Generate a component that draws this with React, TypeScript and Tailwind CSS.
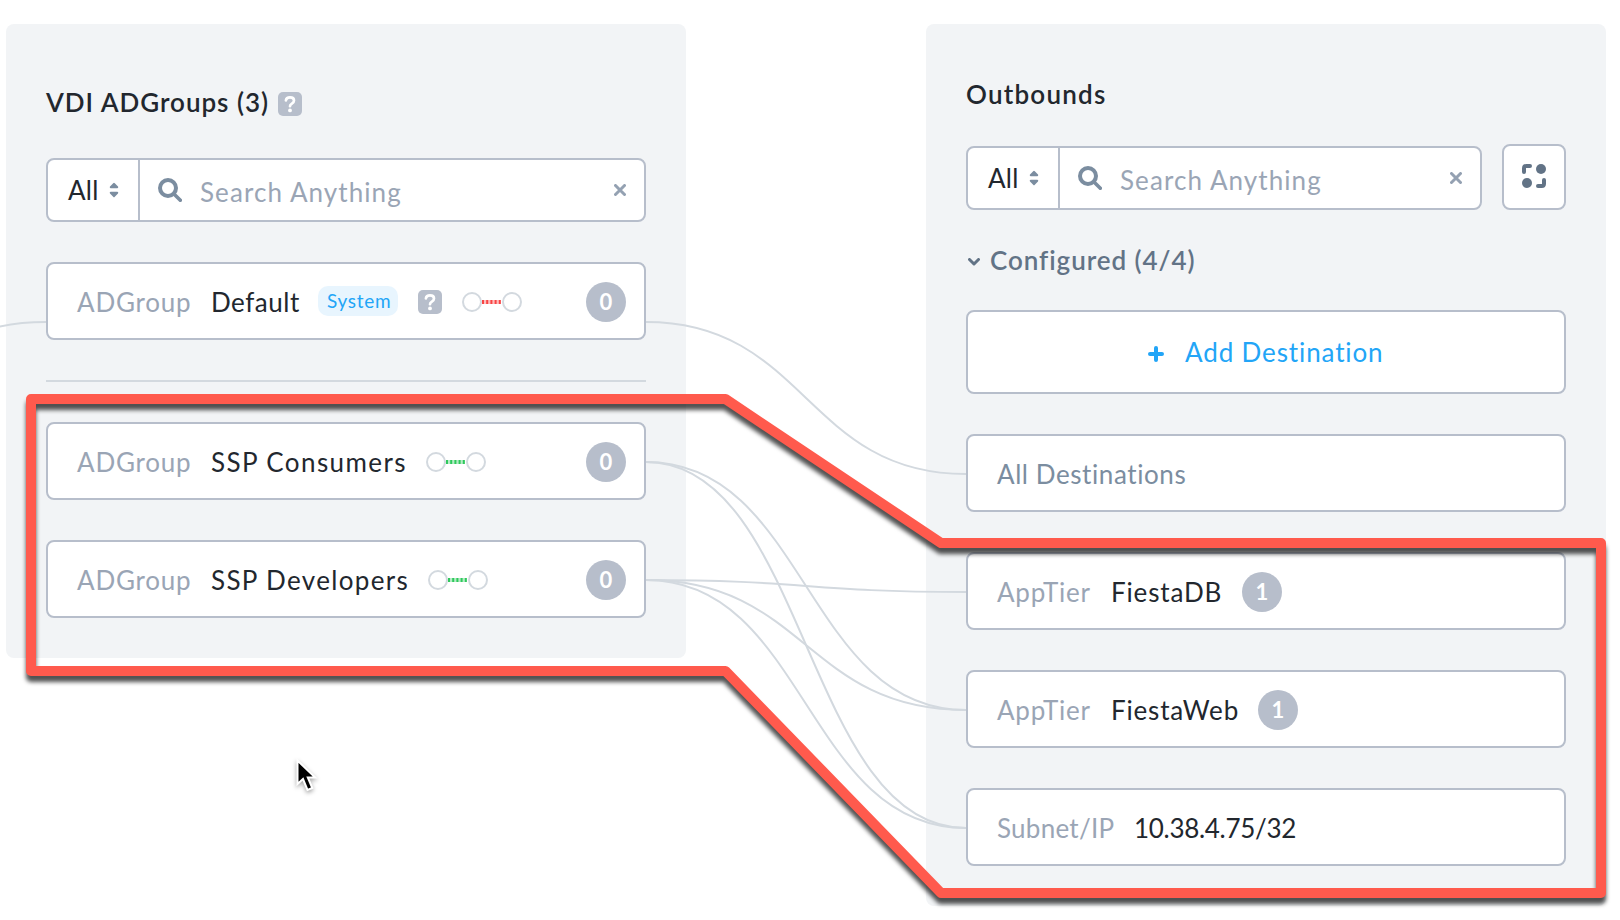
import type { ReactNode } from "react";

const box = "box-border flex shrink-0 rounded-[8px] border-2 border-[#b7becb] bg-white";

function HelpIcon() {
  return (
    <svg className="block h-6 w-6 shrink-0" viewBox="0 0 24 24" fill="none">
      <rect width="24" height="24" rx="5" fill="#b7becb" />
      <path
        d="M7.9 8.4C8.2 6.3 9.8 5.4 12 5.4c2.4 0 4 1.1 4 3.1 0 1.6-.9 2.4-2.1 3.1-1.2.7-1.9 1.1-1.9 2.6"
        stroke="white"
        strokeWidth="2.7"
        strokeLinecap="round"
      />
      <circle cx="12" cy="18.4" r="1.9" fill="white" />
    </svg>
  );
}

function LinkIcon({ color }: { color: string }) {
  return (
    <svg className="block h-5 w-[60px] shrink-0" viewBox="0 0 60 20" fill="none">
      <circle cx="10" cy="10" r="9" stroke="#d3d9df" strokeWidth="2" />
      <circle cx="50" cy="10" r="9" stroke="#d3d9df" strokeWidth="2" />
      <rect x="20" y="8" width="19" height="4" fill={color} fillOpacity="0.35" />
      <path d="M20 10H39" stroke={color} strokeWidth="4" strokeDasharray="2 2.2" />
    </svg>
  );
}

function Badge({ children }: { children: ReactNode }) {
  return (
    <span className="flex h-10 w-10 shrink-0 items-center justify-center rounded-full bg-[#b7becb] text-[22px] leading-none font-bold text-white">
      {children}
    </span>
  );
}

function SearchBar({ className }: { className: string }) {
  return (
    <div className={`${box} h-16 ${className}`}>
      <div className="flex w-[92px] shrink-0 items-center border-r-2 border-[#b7becb] pl-5">
        <span className="w-[41px] tracking-[0.3px] text-[#22272e]">All</span>
        <svg className="block h-4 w-[10px]" viewBox="0 0 10 16" fill="#7b8da0">
          <path d="M4.2 1.2a1 1 0 0 1 1.6 0L9 4.6c.5.6.2 1.6-.7 1.6H1.7C.8 6.2.5 5.2 1 4.6Z" />
          <path d="M4.2 14.8a1 1 0 0 0 1.6 0L9 11.4c.5-.6.2-1.6-.7-1.6H1.7c-.9 0-1.2 1-.7 1.6Z" />
        </svg>
      </div>
      <div className="flex flex-1 items-center pr-[18px] pl-[18px]">
        <svg className="block h-6 w-6 shrink-0" viewBox="0 0 24 24" fill="none" stroke="#7b8da0">
          <circle cx="10" cy="10" r="8" strokeWidth="4" />
          <path d="M16 16L22.3 22.3" strokeWidth="3.6" strokeLinecap="round" />
        </svg>
        <span className="flex-1 pt-1 pl-[18px] tracking-[1.08px] text-[#9aa5b5]">Search Anything</span>
        <svg className="block h-3 w-3 shrink-0" viewBox="0 0 12 12" stroke="#94a1b2" strokeWidth="3" strokeLinecap="round">
          <path d="M1.5 1.5L10.5 10.5M10.5 1.5L1.5 10.5" />
        </svg>
      </div>
    </div>
  );
}

function Row({ label, labelClass, children }: { label: string; labelClass: string; children: ReactNode }) {
  return (
    <div className={`${box} h-[78px] items-center pt-[2px] pr-[18px] pl-[29px]`}>
      <span className={`shrink-0 text-[#9aa5b5] ${labelClass}`}>{label}</span>
      {children}
    </div>
  );
}

function Connectors() {
  return (
    <svg className="pointer-events-none absolute inset-0 h-[920px] w-[1620px]" viewBox="0 0 1620 920" fill="none">
      <g stroke="#d3d9df" strokeWidth="2">
        <path d="M-20 332C0 325 22 322 46 322" />
        <path d="M646 322C806 322 806 474 966 474" />
        <path d="M646 462C806 462 806 710 966 710" />
        <path d="M646 462C806 462 806 828 966 828" />
        <path d="M646 580C806 580 806 592 966 592" />
        <path d="M646 580C806 580 806 710 966 710" />
        <path d="M646 580C806 580 806 828 966 828" />
      </g>
    </svg>
  );
}

function Highlight() {
  return (
    <svg className="pointer-events-none absolute inset-0 h-[920px] w-[1620px]" viewBox="0 0 1620 920" fill="none">
      <path
        className="drop-shadow-[0_6px_2px_rgba(0,0,0,0.68)]"
        d="M31 399H725.5L941 543H1601V893H941L725.5 671H31Z"
        stroke="#ff5a4d"
        strokeWidth="10"
        strokeLinejoin="round"
      />
    </svg>
  );
}

function Cursor() {
  return (
    <svg
      className="pointer-events-none absolute top-[758px] left-[294px] h-[38px] w-[28px] drop-shadow-[0_2px_2px_rgba(0,0,0,0.35)]"
      viewBox="0 0 28 38"
    >
      <path
        d="M3.500 2.5V26L9 21L13.500 32L18.300 30L13.800 19.500H21.200Z"
        fill="black"
        stroke="white"
        strokeWidth="2"
      />
    </svg>
  );
}

export default function App() {
  return (
    <div className="relative h-[920px] w-[1620px] overflow-hidden bg-white font-['Lato',sans-serif] text-[26px] leading-[32px] whitespace-nowrap text-[#22272e]">
      <div className="flex items-start gap-[240px] pt-6 pl-[6px]">
        <section className="flex h-[634px] w-[680px] shrink-0 flex-col rounded-[8px] bg-[#f2f4f6] px-10 pt-[62px]">
          <header className="flex h-8 items-center">
            <h2 className="w-[232px] font-semibold tracking-[0.98px]">VDI ADGroups (3)</h2>
            <div className="pt-1">
              <HelpIcon />
            </div>
          </header>
          <SearchBar className="mt-10 mb-10" />
          <Row label="ADGroup" labelClass="w-[134px] tracking-[0.78px]">
            <span className="w-[107px] tracking-[0.53px]">Default</span>
            <span className="mb-[2px] flex h-[30px] w-20 items-center rounded-[10px] bg-[#e8f5fe] pl-[9px] text-[19px] tracking-[0.7px] text-[#22a5f7]">
              System
            </span>
            <span className="ml-5 flex items-center gap-5">
              <HelpIcon />
              <LinkIcon color="#f84545" />
            </span>
            <span className="ml-auto">
              <Badge>0</Badge>
            </span>
          </Row>
          <hr className="my-10 h-[2px] shrink-0 border-0 bg-[#d3d9df]" />
          <div className="flex flex-col gap-10">
            <Row label="ADGroup" labelClass="w-[134px] tracking-[0.78px]">
              <span className="w-[215px] tracking-[1.4px]">SSP Consumers</span>
              <LinkIcon color="#2fc95c" />
              <span className="ml-auto">
                <Badge>0</Badge>
              </span>
            </Row>
            <Row label="ADGroup" labelClass="w-[134px] tracking-[0.78px]">
              <span className="w-[217px] tracking-[1.33px]">SSP Developers</span>
              <LinkIcon color="#2fc95c" />
              <span className="ml-auto">
                <Badge>0</Badge>
              </span>
            </Row>
          </div>
        </section>

        <section className="flex h-[882px] w-[680px] shrink-0 flex-col rounded-[8px] bg-[#f2f4f6] px-10 pt-[54px]">
          <h2 className="font-semibold tracking-[1.22px]">Outbounds</h2>
          <div className="mt-[34px] flex items-end gap-5">
            <SearchBar className="w-[516px]" />
            <button className={`${box} h-[66px] w-16 items-center justify-center pb-[2px]`} aria-label="Group">
              <svg className="block h-6 w-6" viewBox="0 0 24 24" fill="none">
                <circle cx="19" cy="5" r="5" fill="#627386" />
                <circle cx="5" cy="19" r="5" fill="#627386" />
                <path
                  d="M2 8V4.2Q2 2 4.2 2H8M22 16V19.8Q22 22 19.8 22H16"
                  stroke="#627386"
                  strokeWidth="4"
                  strokeLinecap="round"
                  strokeLinejoin="round"
                />
              </svg>
            </button>
          </div>
          <div className="mt-[34px] flex h-8 items-center text-[#627386]">
            <svg className="mx-[2px] mt-1 block h-2 w-3" viewBox="0 0 12 8" fill="none" stroke="#627386">
              <path d="M1.5 1.5L6 6L10.5 1.5" strokeWidth="3" strokeLinecap="round" strokeLinejoin="round" />
            </svg>
            <span className="pl-2 font-semibold tracking-[0.94px]">Configured (4/4)</span>
          </div>
          <div className="mt-[34px] flex flex-col gap-10">
            <button className={`${box} h-[84px] items-center pl-[180px] text-[#22a5f7]`}>
              <svg className="mt-1 block h-4 w-4" viewBox="0 0 16 16" stroke="#22a5f7" strokeWidth="4" strokeLinecap="round">
                <path d="M8 2V14M2 8H14" />
              </svg>
              <span className="pl-[21px] tracking-[0.88px]">Add Destination</span>
            </button>
            <div className={`${box} h-[78px] items-center pt-[2px] pl-[29px] tracking-[0.58px] text-[#7b8da0]`}>
              All Destinations
            </div>
            <Row label="AppTier" labelClass="w-[114px] tracking-[0.8px]">
              <span className="w-[131px] tracking-[0.85px]">FiestaDB</span>
              <Badge>1</Badge>
            </Row>
            <Row label="AppTier" labelClass="w-[114px] tracking-[0.8px]">
              <span className="w-[147px] tracking-[0.82px]">FiestaWeb</span>
              <Badge>1</Badge>
            </Row>
            <Row label="Subnet/IP" labelClass="w-[137px] tracking-[0.26px]">
              <span className="tracking-[-0.3px]">10.38.4.75/32</span>
            </Row>
          </div>
        </section>
      </div>
      <Connectors />
      <Highlight />
      <Cursor />
    </div>
  );
}
